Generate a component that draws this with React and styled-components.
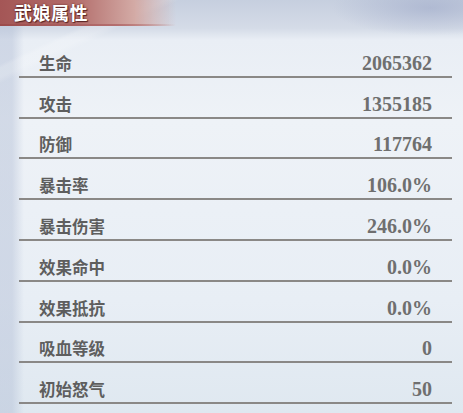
import React from "react";
import styled, { createGlobalStyle } from "styled-components";

const GlobalStyle = createGlobalStyle`
  html, body {
    margin: 0;
    padding: 0;
    background: #e8eef5;
  }
`;

const Panel = styled.div`
  width: 463px;
  height: 413px;
  overflow: hidden;
  display: flex;
  flex-direction: column;
  background:
    radial-gradient(ellipse 140px 40px at 430px 8px, rgba(150, 162, 196, 0.5), transparent 70%),
    linear-gradient(155deg, transparent 0 58px, rgba(255, 255, 255, 0.18) 62px 70px, transparent 76px),
    linear-gradient(90deg, rgba(176, 188, 212, 0.45) 0 12px, transparent 24px),
    linear-gradient(180deg, #c6cfdf 0px, #d4dbe7 28px, #e9eef5 40px, #eef2f7 120px, #e8eef5 300px, #dfe8f0 413px);
`;

const Header = styled.div`
  height: 24px;
  flex-shrink: 0;
  display: flex;
  align-items: center;
  padding-left: 14px;
  border-bottom: 2px solid transparent;
  border-image: linear-gradient(90deg, #9b4a4a 0%, #b46e6e 25%, rgba(180, 120, 120, 0) 38%) 1;
  background: linear-gradient(
    90deg,
    #a45656 0%,
    #b26c6a 16%,
    #d3aaa5 29%,
    rgba(210, 180, 180, 0) 38%
  );
`;

const Title = styled.h1`
  margin: 0;
  font-family: "Noto Sans CJK SC", sans-serif;
  font-size: 18px;
  font-weight: 700;
  letter-spacing: 0.5px;
  color: #fff;
  text-shadow: 0 0 2px #5a2424, 1px 1px 1px #5a2424;
`;

const List = styled.div`
  display: flex;
  flex-direction: column;
  padding: 11px 11px 0 19px;
`;

const Row = styled.div`
  height: 37.8px;
  display: flex;
  align-items: flex-end;
  justify-content: space-between;
  padding: 0 20px 1px 20px;
  border-bottom: 2px solid #8a8886;
`;

const Label = styled.span`
  font-family: "Noto Sans CJK SC", sans-serif;
  font-size: 16.5px;
  font-weight: 700;
  color: #5e5e5e;
  line-height: 24px;
`;

const Value = styled.span`
  font-family: "Liberation Serif", serif;
  font-size: 20px;
  font-weight: 700;
  color: #6f6f6f;
  line-height: 24px;
`;

const stats = [
  ["生命", "2065362"],
  ["攻击", "1355185"],
  ["防御", "117764"],
  ["暴击率", "106.0%"],
  ["暴击伤害", "246.0%"],
  ["效果命中", "0.0%"],
  ["效果抵抗", "0.0%"],
  ["吸血等级", "0"],
  ["初始怒气", "50"],
];

const App = () => {
  return (
    <Panel>
      <GlobalStyle />
      <Header>
        <Title>武娘属性</Title>
      </Header>
      <List>
        {stats.map(([label, value]) => (
          <Row key={label}>
            <Label>{label}</Label>
            <Value>{value}</Value>
          </Row>
        ))}
      </List>
    </Panel>
  );
};

export default App;
